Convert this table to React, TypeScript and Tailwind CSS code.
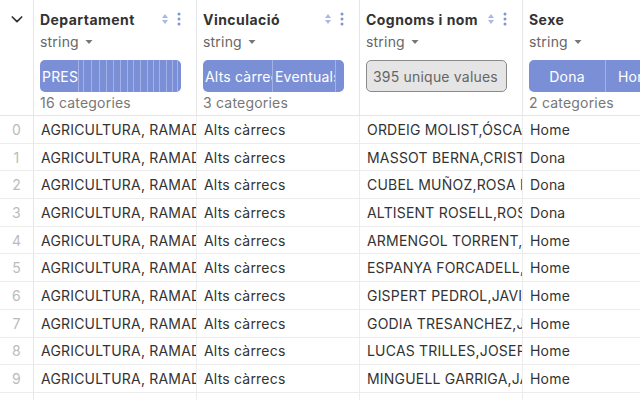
import React from "react";

const font = { fontFamily: "Inter, 'Noto Sans', sans-serif", letterSpacing: "0.2px" };

const rows: [string, string, string, string][] = [
  ["AGRICULTURA, RAMADERIA", "Alts càrrecs", "ORDEIG MOLIST,ÓSCAR", "Home"],
  ["AGRICULTURA, RAMADERIA", "Alts càrrecs", "MASSOT BERNA,CRISTINA", "Dona"],
  ["AGRICULTURA, RAMADERIA", "Alts càrrecs", "CUBEL MUÑOZ,ROSA MARIA", "Dona"],
  ["AGRICULTURA, RAMADERIA", "Alts càrrecs", "ALTISENT ROSELL,ROSA", "Dona"],
  ["AGRICULTURA, RAMADERIA", "Alts càrrecs", "ARMENGOL TORRENT,PERE", "Home"],
  ["AGRICULTURA, RAMADERIA", "Alts càrrecs", "ESPANYA FORCADELL,ANDREU", "Home"],
  ["AGRICULTURA, RAMADERIA", "Alts càrrecs", "GISPERT PEDROL,JAVIER", "Home"],
  ["AGRICULTURA, RAMADERIA", "Alts càrrecs", "GODIA TRESANCHEZ,JOSEP", "Home"],
  ["AGRICULTURA, RAMADERIA", "Alts càrrecs", "LUCAS TRILLES,JOSEP", "Home"],
  ["AGRICULTURA, RAMADERIA", "Alts càrrecs", "MINGUELL GARRIGA,JAUME", "Home"],
  ["AGRICULTURA, RAMADERIA", "Alts càrrecs", "", ""],
];

function SortIcon() {
  return (
    <svg width="8" height="12" viewBox="0 0 8 12">
      <path d="M4 1 L7 5 L1 5 Z" fill="#a9b8e6" />
      <path d="M4 11 L7 7 L1 7 Z" fill="#a9b8e6" />
    </svg>
  );
}

function DotsIcon() {
  return (
    <svg width="4" height="14" viewBox="0 0 4 14">
      <circle cx="2" cy="2" r="1.5" fill="#7e96d8" />
      <circle cx="2" cy="7" r="1.5" fill="#7e96d8" />
      <circle cx="2" cy="12" r="1.5" fill="#7e96d8" />
    </svg>
  );
}

function Caret() {
  return (
    <svg width="8" height="6" viewBox="0 0 8 6" className="ml-[6px] mt-[2px]">
      <path d="M0.5 1 L7.5 1 L4 5 Z" fill="#777" />
    </svg>
  );
}

type Seg = { w: number; label?: string; center?: boolean };

function Bar({ segs }: { segs: Seg[] }) {
  return (
    <div className="h-8 rounded-[5px] bg-[#7b8fd6] flex overflow-hidden">
      {segs.map((s, i) => (
        <div
          key={i}
          className={
            "h-full shrink-0 flex items-center overflow-hidden whitespace-nowrap text-white text-[14px] " +
            (i > 0 ? "border-l border-[#a3b1e6] " : "") +
            (s.center ? "justify-center" : "pl-[2px]")
          }
          style={{ width: s.w }}
        >
          {s.label}
        </div>
      ))}
    </div>
  );
}

function Header({
  title,
  icons,
  children,
  label,
  last,
}: {
  title: string;
  icons?: boolean;
  children: React.ReactNode;
  label: string;
  last?: boolean;
}) {
  return (
    <div
      className={
        "w-[163px] shrink-0 h-full flex flex-col pl-[6px] pr-[15px] pt-[9px] " +
        (last ? "" : "border-r border-[#e6e6e6]")
      }
    >
      <div className="h-5 flex items-center justify-between">
        <span className="text-[14px] font-bold text-[#333] whitespace-nowrap tracking-[0.45px]">{title}</span>
        {icons && (
          <div className="flex items-center gap-[8px]">
            <SortIcon />
            <DotsIcon />
          </div>
        )}
      </div>
      <div className="h-5 mt-[2px] flex items-center text-[14px] text-[#666]">
        string
        <Caret />
      </div>
      <div className="mt-[9px] w-[141px]">{children}</div>
      <div className="h-5 flex items-center text-[14px] text-[#777] whitespace-nowrap">{label}</div>
    </div>
  );
}

export default function App() {
  const deptSegs: Seg[] = [
    { w: 37.7, label: "PRES" },
    { w: 5.6 },
    { w: 7.7 },
    { w: 8 },
    { w: 7 },
    { w: 6.7 },
    { w: 7.3 },
    { w: 6.7 },
    { w: 6.3 },
    { w: 7 },
    { w: 6.7 },
    { w: 6.3 },
    { w: 6 },
    { w: 7 },
    { w: 6 },
    { w: 4.7 },
    { w: 4 },
  ];
  return (
    <div className="w-[640px] h-[400px] overflow-hidden bg-white" style={font}>
      <div className="flex h-[116px] border-b border-[#e6e6e6]">
        <div className="w-[34px] shrink-0 border-r border-[#e6e6e6] flex justify-center pt-[11px]">
          <svg width="16" height="16" viewBox="0 0 24 24" fill="none" stroke="#333" strokeWidth="2.6" strokeLinecap="round" strokeLinejoin="round">
            <path d="M5 9l7 7 7-7" />
          </svg>
        </div>
        <Header title="Departament" icons label="16 categories">
          <Bar segs={deptSegs} />
        </Header>
        <Header title="Vinculació" icons label="3 categories">
          <Bar
            segs={[
              { w: 69, label: "Alts càrrecs" },
              { w: 63, label: "Eventuals" },
              { w: 9 },
            ]}
          />
        </Header>
        <Header title="Cognoms i nom" icons label="">
          <div className="h-8 rounded-[5px] bg-[#e5e5e5] border border-[#8a8a8a] flex items-center pl-[6px] text-[14px] text-[#666] whitespace-nowrap">
            395 unique values
          </div>
        </Header>
        <Header title="Sexe" label="2 categories" last>
          <Bar
            segs={[
              { w: 76, label: "Dona", center: true },
              { w: 65, label: "Home", center: true },
            ]}
          />
        </Header>
      </div>
      {rows.map((r, i) => (
        <div key={i} className="flex h-[27.7px] border-b border-[#ececec] text-[14px] text-[#333]">
          <div className="w-[34px] shrink-0 border-r border-[#e6e6e6] flex items-center justify-center text-[#bbb]">
            {i < 10 ? i : ""}
          </div>
          {r.map((c, j) => (
            <div
              key={j}
              className={
                "w-[163px] shrink-0 flex items-center pl-[7px] overflow-hidden whitespace-nowrap " +
                (j < 3 ? "border-r border-[#ececec]" : "")
              }
            >
              {c}
            </div>
          ))}
        </div>
      ))}
    </div>
  );
}
